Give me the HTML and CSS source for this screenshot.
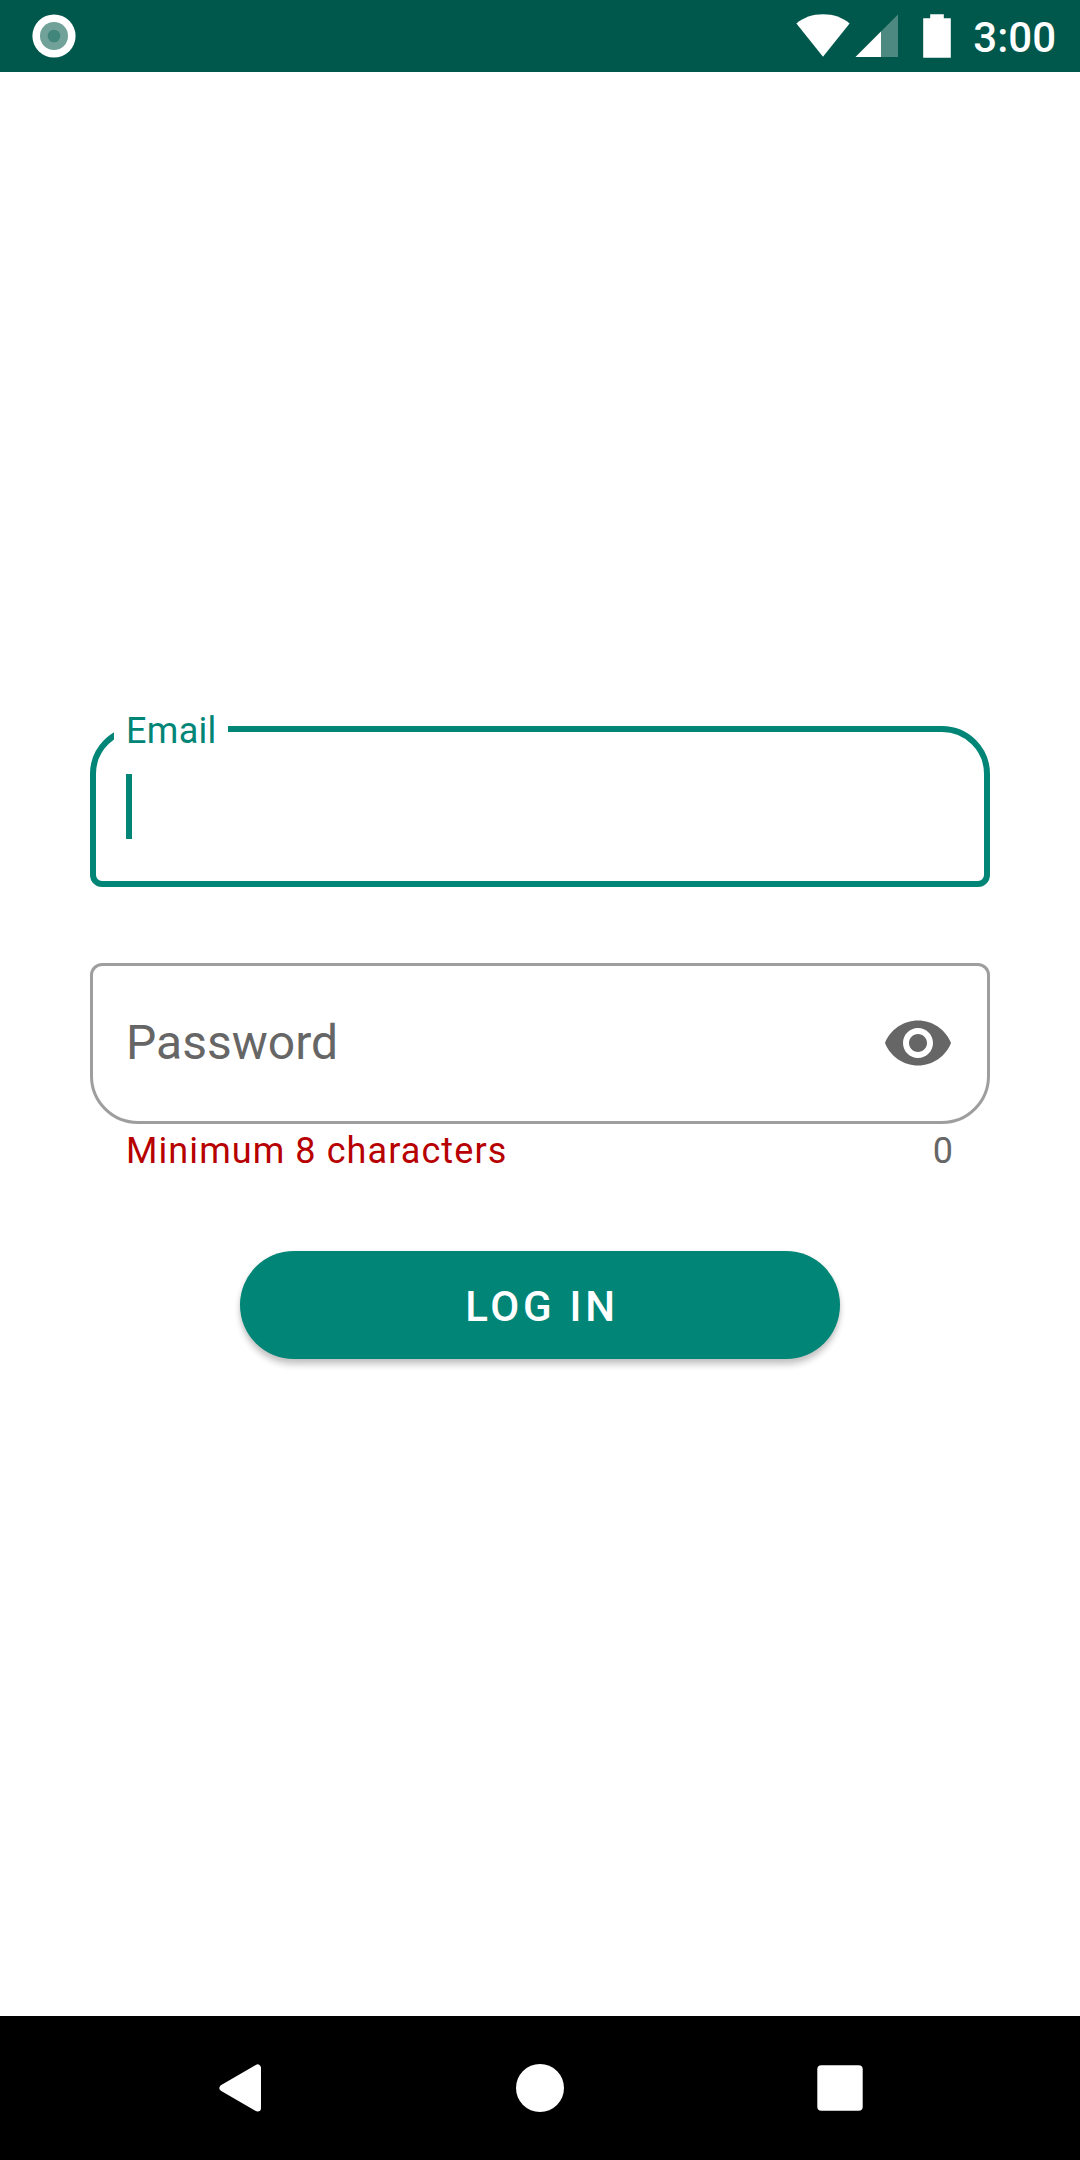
FILE: index.html
```html
<!DOCTYPE html>
<html lang="en">
<head>
<meta charset="utf-8">
<title>Log in</title>
<link rel="stylesheet" href="styles.css">
</head>
<body>
<div class="screen">
  <header class="status-bar">
    <svg class="status-record" viewBox="0 0 44 44" aria-hidden="true">
      <circle cx="22" cy="22" r="21.6" fill="#fff"/>
      <circle cx="22" cy="22" r="14" fill="#70a299"/>
      <circle cx="22" cy="22" r="6.3" fill="#42857b"/>
    </svg>
    <div class="status-icons">
      <svg class="status-wifi" viewBox="0 0 54 44" aria-hidden="true">
        <path d="M27 42.700 .4 9.500C7.500 3.500 16.500 .3 27 .3S46.500 3.500 53.600 9.500Z" fill="#fff"/>
      </svg>
      <svg class="status-signal" viewBox="0 0 44 44" aria-hidden="true">
        <path d="M43 .5V43H.5Z" fill="#fff" fill-opacity=".3"/>
        <path d="M26 17.500V43H.5Z" fill="#fff"/>
      </svg>
      <svg class="status-battery" viewBox="0 0 28 44" aria-hidden="true">
        <path d="M7.200 .2H20.800V4.200H27.800V43.800H.2V4.200H7.200Z" fill="#fff"/>
      </svg>
      <time class="clock">3:00</time>
    </div>
  </header>

  <main class="content">
    <form class="login">
      <div class="field field-email">
        <label class="field-label">Email</label>
        <span class="caret"></span>
      </div>
      <div class="field field-password">
        <span class="placeholder">Password</span>
        <svg class="eye" viewBox="0 0 24 24" aria-hidden="true">
          <path fill="#666" d="M12 4.500C7 4.500 2.730 7.610 1 12c1.730 4.390 6 7.500 11 7.500s9.270-3.110 11-7.500c-1.730-4.390-6-7.500-11-7.500zM12 17c-2.760 0-5-2.240-5-5s2.240-5 5-5 5 2.240 5 5-2.240 5-5 5zm0-8c-1.660 0-3 1.340-3 3s1.340 3 3 3 3-1.340 3-3-1.340-3-3-3z"/>
        </svg>
      </div>
      <div class="helper">
        <span class="error">Minimum 8 characters</span>
        <span class="counter">0</span>
      </div>
      <button class="login-button" type="button">LOG IN</button>
    </form>
  </main>

  <nav class="nav-bar">
    <svg class="nav-icon" viewBox="0 0 60 60" aria-hidden="true">
      <path d="M47.500 10V50L13 30Z" fill="#fff" stroke="#fff" stroke-width="7" stroke-linejoin="round"/>
    </svg>
    <svg class="nav-icon" viewBox="0 0 60 60" aria-hidden="true">
      <circle cx="30" cy="30" r="24" fill="#fff"/>
    </svg>
    <svg class="nav-icon" viewBox="0 0 60 60" aria-hidden="true">
      <rect x="7.300" y="7.300" width="45.400" height="45.400" rx="4" fill="#fff"/>
    </svg>
  </nav>
</div>
</body>
</html>
```
FILE: styles.css
```css
* {
  box-sizing: border-box;
}

body {
  margin: 0;
  font-family: Roboto, "Liberation Sans", sans-serif;
  background: #fff;
}

.screen {
  display: flex;
  flex-direction: column;
  width: 1080px;
  height: 2160px;
}

.status-bar {
  display: flex;
  align-items: center;
  justify-content: space-between;
  height: 72px;
  padding: 0 24px 0 32px;
  background: #00574b;
}

.status-record {
  width: 44px;
  height: 44px;
}

.status-icons {
  display: flex;
  align-items: center;
}

.status-wifi {
  width: 54px;
  height: 44px;
}

.status-signal {
  width: 44px;
  height: 44px;
  margin-left: 5px;
}

.status-battery {
  width: 28px;
  height: 44px;
  margin-left: 24px;
}

.clock {
  margin-left: 22px;
  padding-top: 3px;
  font-size: 42px;
  font-weight: 500;
  line-height: 49px;
  color: #fff;
}

.content {
  flex: 1;
  padding: 654px 90px 0;
}

.login {
  display: flex;
  flex-direction: column;
}

.field {
  display: flex;
  height: 161px;
}

.field-email {
  position: relative;
  padding: 42px 30px 0;
  border: 6px solid #008577;
  border-radius: 48px 48px 12px 12px;
}

.field-label {
  position: absolute;
  top: -22px;
  left: 18px;
  width: 114px;
  padding-left: 12px;
  font-size: 36px;
  line-height: 42px;
  letter-spacing: .3px;
  color: #008577;
  background: #fff;
}

.caret {
  width: 6px;
  height: 65px;
  background: #008577;
}

.field-password {
  align-items: center;
  justify-content: space-between;
  margin-top: 76px;
  padding: 0 33px 2px;
  border: 3px solid #9e9e9e;
  border-radius: 12px 12px 48px 48px;
}

.placeholder {
  font-size: 48px;
  line-height: 56px;
  color: #666;
}

.eye {
  width: 72px;
  height: 72px;
}

.helper {
  display: flex;
  justify-content: space-between;
  padding: 6px 36px 0;
  font-size: 36px;
  line-height: 42px;
  letter-spacing: 1.080px;
}

.error {
  color: #b70000;
}

.counter {
  color: #666;
}

.login-button {
  align-self: center;
  width: 600px;
  height: 108px;
  margin-top: 79px;
  padding: 3px 0 0 4px;
  border: 0;
  border-radius: 54px;
  font: 500 42px/49px Roboto, "Liberation Sans", sans-serif;
  letter-spacing: 3.750px;
  color: #fff;
  background: #008577;
  box-shadow: 0 6px 6px rgba(0, 0, 0, .2), 0 1px 5px rgba(0, 0, 0, .08);
}

.nav-bar {
  display: flex;
  justify-content: center;
  align-items: center;
  gap: 240px;
  height: 144px;
  background: #000;
}

.nav-icon {
  width: 60px;
  height: 60px;
}
```
